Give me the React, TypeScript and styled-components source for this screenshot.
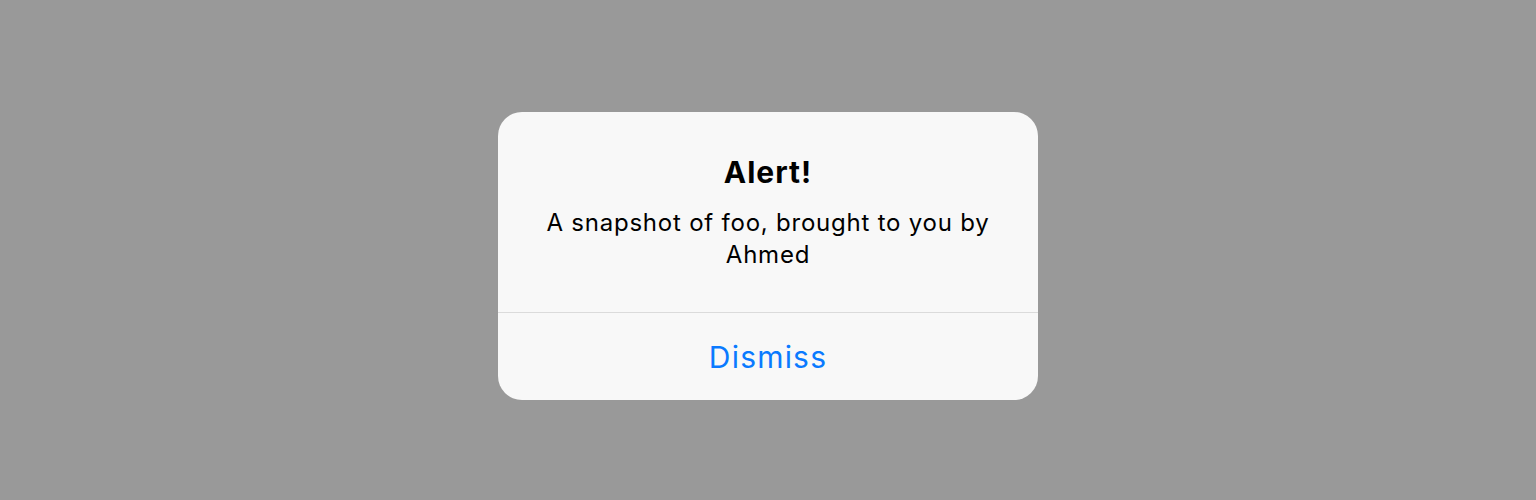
import React from "react";
import styled, { createGlobalStyle } from "styled-components";

const Global = createGlobalStyle`
  html, body { margin: 0; padding: 0; }
  body {
    background: #999999;
    font-family: Inter, "Noto Sans", sans-serif;
    -webkit-font-smoothing: antialiased;
  }
`;

const Screen = styled.div`
  width: 1536px;
  height: 500px;
  display: flex;
  align-items: flex-start;
  justify-content: center;
  padding-top: 112px;
  box-sizing: border-box;
`;

const Dialog = styled.div`
  width: 540px;
  background: #f8f8f8;
  border-radius: 24px;
  overflow: hidden;
  display: flex;
  flex-direction: column;
`;

const Content = styled.div`
  padding: 42px 36px 41px;
  display: flex;
  flex-direction: column;
  align-items: center;
  gap: 17px;
  text-align: center;
`;

const Title = styled.h2`
  margin: 0;
  font-size: 30px;
  line-height: 36px;
  font-weight: 700;
  letter-spacing: 1px;
  color: #000;
`;

const Message = styled.p`
  margin: 0;
  font-size: 24px;
  line-height: 32px;
  font-weight: 400;
  letter-spacing: 0.78px;
  color: #000;
`;

const Divider = styled.div`
  height: 1px;
  background: #dbdbdb;
`;

const Action = styled.button`
  height: 87px;
  border: none;
  background: transparent;
  font-family: inherit;
  font-size: 30px;
  letter-spacing: 1.2px;
  color: #0a7aff;
  cursor: pointer;
  padding: 0;
`;

export default function App() {
  return (
    <>
      <Global />
      <Screen>
        <Dialog>
          <Content>
            <Title>Alert!</Title>
            <Message>A snapshot of foo, brought to you by Ahmed</Message>
          </Content>
          <Divider />
          <Action>Dismiss</Action>
        </Dialog>
      </Screen>
    </>
  );
}
